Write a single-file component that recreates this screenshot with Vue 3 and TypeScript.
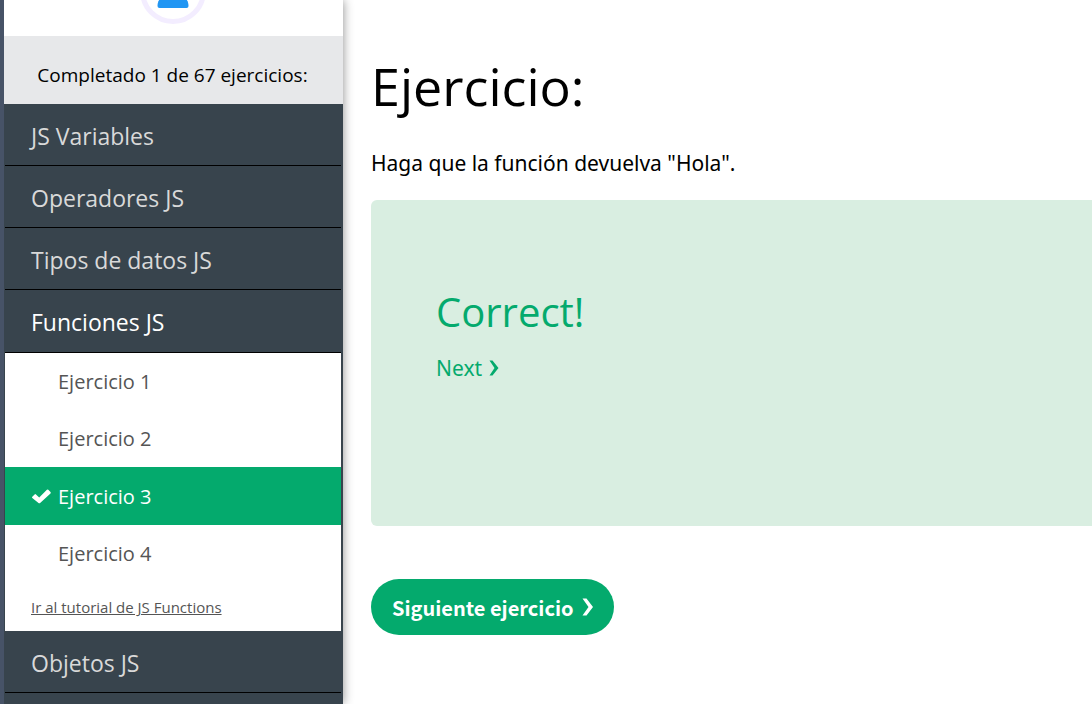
<script setup lang="ts">
import { ref } from 'vue'

interface Topic {
  title: string
  tutorial?: string
  exercises?: string[]
}

const topics: Topic[] = [
  { title: 'JS Variables' },
  { title: 'Operadores JS' },
  { title: 'Tipos de datos JS' },
  {
    title: 'Funciones JS',
    tutorial: 'Ir al tutorial de JS Functions',
    exercises: ['Ejercicio 1', 'Ejercicio 2', 'Ejercicio 3', 'Ejercicio 4'],
  },
  { title: 'Objetos JS' },
]

const openTopic = ref('Funciones JS')
const current = ref('Ejercicio 3')
</script>

<template>
  <div class="page">
    <aside class="sidebar">
      <div class="profile">
        <svg class="avatar" width="66" height="66" viewBox="0 0 66 66" aria-hidden="true">
          <circle cx="33" cy="33" r="30.5" fill="#fff" stroke="#f3edff" stroke-width="5" />
          <circle cx="33" cy="23" r="9" fill="#2196f3" />
          <path d="M17.500 48C17.500 41 23 36 33 36S48.500 41 48.500 48Q48.500 50 46.500 50H19.500Q17.500 50 17.500 48Z" fill="#2196f3" />
        </svg>
      </div>
      <p class="progress">Completado 1 de 67 ejercicios:</p>
      <nav class="topics">
        <section v-for="topic in topics" :key="topic.title">
          <button
            type="button"
            class="topic"
            :class="{ open: topic.title === openTopic }"
            @click="openTopic = topic.title"
          >
            {{ topic.title }}
          </button>
          <div v-if="topic.exercises && topic.title === openTopic" class="exercises">
            <a
              v-for="name in topic.exercises"
              :key="name"
              href="#"
              class="exercise"
              :class="{ active: name === current }"
              @click.prevent="current = name"
            >
              <span class="mark">
                <svg v-if="name === current" width="21" height="16" viewBox="0 0 21 16" aria-hidden="true">
                  <path d="M1.300 8.700L3.600 6.400Q4.300 5.800 5 6.400L8.200 9.500L15.900 1.800Q16.600 1.200 17.300 1.800L19.500 4Q20.100 4.700 19.500 5.400L9.100 15Q8.300 15.600 7.500 15L1.300 10.100Q0.700 9.400 1.300 8.700Z" fill="#fff" />
                </svg>
              </span>
              {{ name }}
            </a>
            <a href="#" class="tutorial">{{ topic.tutorial }}</a>
          </div>
        </section>
      </nav>
    </aside>

    <main class="content">
      <h1>Ejercicio:</h1>
      <p class="task">Haga que la función devuelva "Hola".</p>
      <section class="result">
        <h2>Correct!</h2>
        <a href="#" class="next">
          Next
          <svg width="10" height="16" viewBox="0 0 10 16" aria-hidden="true">
            <path d="M0.500 0.500H3.500L9.500 8L3.500 15.500H0.500L5.500 8Z" fill="currentColor" />
          </svg>
        </a>
      </section>
      <button type="button" class="advance">
        Siguiente ejercicio
        <svg width="12" height="18" viewBox="0 0 12 18" aria-hidden="true">
          <path d="M0.500 0.500H4.500L11 9L4.500 17.500H0.500L6.500 9Z" fill="currentColor" />
        </svg>
      </button>
    </main>
  </div>
</template>

<style>
body {
  margin: 0;
  background: #fff;
}
</style>

<style scoped>
.page {
  display: grid;
  grid-template-columns: 343px 1fr;
  height: 100vh;
  overflow: hidden;
  font-family: "Open Sans", "Noto Sans", sans-serif;
  color: #000;
}

.sidebar {
  box-sizing: border-box;
  border-left: 4px solid #475367;
  background: #38444d;
  box-shadow: 0 0 10px rgba(0, 0, 0, 0.45);
}

.profile {
  display: flex;
  justify-content: center;
  align-items: flex-end;
  height: 24px;
  padding: 0 2px 12px 0;
  background: #fff;
  overflow: hidden;
}

.avatar {
  flex: none;
}

.progress {
  margin: 0;
  padding: 24px 2px 14px 0;
  background: #e7e8ea;
  font-size: 19px;
  line-height: 30px;
  text-align: center;
}

.topics {
  padding: 0 2px 0 1px;
}

.topic {
  display: block;
  box-sizing: border-box;
  width: 100%;
  height: 62px;
  padding: 2px 26px 0;
  border: 0;
  border-bottom: 1px solid #000;
  background: #38444d;
  color: #d9d9d9;
  font: inherit;
  font-size: 23px;
  text-align: left;
  cursor: pointer;
}

.topic.open {
  height: 63px;
  color: #fff;
}

.exercises {
  background: #fff;
  padding-bottom: 10px;
}

.exercise {
  display: flex;
  align-items: center;
  height: 57px;
  padding-left: 26px;
  color: #555;
  font-size: 20px;
  text-decoration: none;
}

.exercise.active {
  height: 58px;
  background: #04aa6d;
  color: #fff;
}

.mark {
  display: flex;
  width: 27px;
}

.tutorial {
  display: block;
  padding: 12px 26px 0;
  color: #555;
  font-size: 15px;
  line-height: 27px;
}

.content {
  min-width: 0;
  padding: 46px 0 0 28px;
}

h1 {
  margin: 0;
  font-size: 52px;
  font-weight: 400;
  line-height: 80px;
}

.task {
  margin: 20px 0;
  font-family: "Noto Sans", sans-serif;
  font-size: 21px;
  line-height: 34px;
}

.result {
  box-sizing: border-box;
  min-height: 326px;
  padding: 80px 65px;
  border-radius: 6px 0 0 6px;
  background: #d9eee1;
  color: #04aa6d;
}

h2 {
  margin: 0;
  font-size: 40px;
  font-weight: 400;
  line-height: 64px;
}

.next {
  display: inline-flex;
  align-items: center;
  gap: 7px;
  color: #04aa6d;
  font-family: "Noto Sans", sans-serif;
  font-size: 21px;
  line-height: 48px;
  text-decoration: none;
}

.advance {
  display: flex;
  align-items: center;
  gap: 8px;
  height: 56px;
  margin-top: 53px;
  padding: 0 20px 0 21px;
  border: 0;
  border-radius: 28px;
  background: #04aa6d;
  color: #fff;
  font-family: "Noto Sans CJK JP", "Noto Sans", sans-serif;
  font-size: 20px;
  font-weight: 700;
  cursor: pointer;
}
</style>
